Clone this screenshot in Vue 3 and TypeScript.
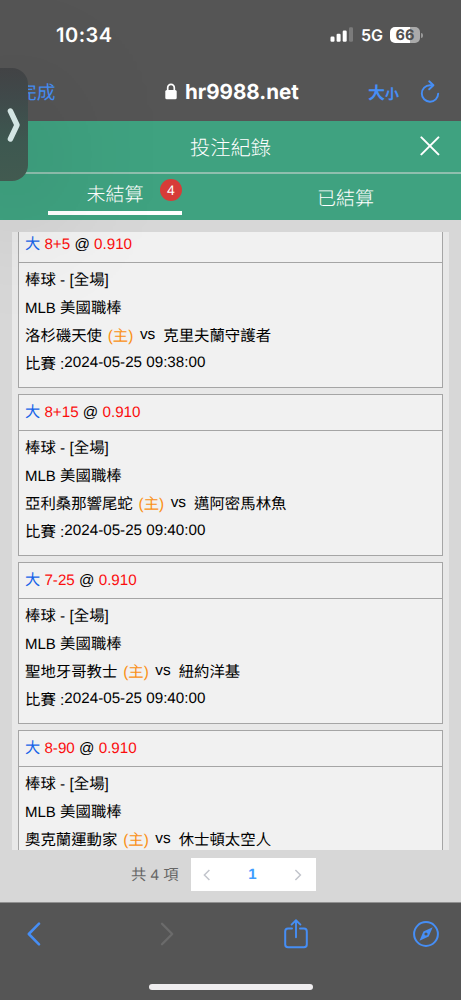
<script setup lang="ts">
import { ref } from 'vue'

interface Bet {
  pick: string
  line: string
  odds: string
  home: string
  away: string
  time: string
}

const bets: Bet[] = [
  { pick: '大', line: '8+5', odds: '0.910', home: '洛杉磯天使', away: '克里夫蘭守護者', time: '2024-05-25 09:38:00' },
  { pick: '大', line: '8+15', odds: '0.910', home: '亞利桑那響尾蛇', away: '邁阿密馬林魚', time: '2024-05-25 09:40:00' },
  { pick: '大', line: '7-25', odds: '0.910', home: '聖地牙哥教士', away: '紐約洋基', time: '2024-05-25 09:40:00' },
  { pick: '大', line: '8-90', odds: '0.910', home: '奧克蘭運動家', away: '休士頓太空人', time: '2024-05-25 09:40:00' },
]

const tab = ref<'open' | 'settled'>('open')
const page = ref(1)
</script>

<template>
  <div class="phone">
    <div class="status-bar">
      <span class="clock">10:34</span>
      <div class="status-icons">
        <svg class="signal" width="24" height="16" viewBox="0 0 24 16">
          <rect x="0.5" y="9.5" width="4" height="5.3" rx="1.2" fill="#fff" />
          <rect x="6.6" y="6.8" width="4" height="8" rx="1.2" fill="#fff" />
          <rect x="12.7" y="3.6" width="4" height="11.2" rx="1.2" fill="#fff" />
          <rect x="19" y="0.3" width="4" height="14.5" rx="1.2" fill="#7b7b7b" />
        </svg>
        <span class="network">5G</span>
        <div class="battery"><span>66</span></div>
        <i class="battery-tip"></i>
      </div>
    </div>

    <div class="address-bar">
      <span class="done">完成</span>
      <div class="site">
        <svg width="12" height="17" viewBox="0 0 12 17">
          <path d="M2.7 8V4.7a3.3 3.4 0 0 1 6.6 0V8" fill="none" stroke="#fff" stroke-width="1.7" />
          <rect x="0.3" y="7" width="11.4" height="9.3" rx="1.6" fill="#fff" />
        </svg>
        <span>hr9988.net</span>
      </div>
      <span class="text-size">大<small>小</small></span>
      <svg class="reload" width="20" height="24" viewBox="0 0 20 24" fill="none" stroke="#468ef5" stroke-width="1.9" stroke-linecap="round" stroke-linejoin="round">
        <path d="M12.5 5.3H10a8.2 8.2 0 1 0 8.2 8.3" />
        <path d="M9.2 1.3l4.2 4-4.2 4" />
      </svg>
    </div>

    <header class="title-bar">
      <h1>投注紀錄</h1>
      <svg class="close" width="20" height="20" viewBox="0 0 20 20" stroke="#fff" stroke-width="2" stroke-linecap="round">
        <path d="M1.4 1.4l17 17M18.4 1.4l-17 17" />
      </svg>
    </header>

    <nav class="tabs">
      <div class="tab" :class="{ active: tab === 'open' }" @click="tab = 'open'">
        <span>未結算</span>
        <b class="badge">{{ bets.length }}</b>
      </div>
      <div class="tab" :class="{ active: tab === 'settled' }" @click="tab = 'settled'">
        <span>已結算</span>
      </div>
    </nav>

    <main class="content">
      <div class="bet-list">
        <article v-for="bet in bets" :key="bet.home" class="bet">
          <div class="bet-head">
            <span class="pick">{{ bet.pick }}</span>&nbsp;<span class="red">{{ bet.line }}</span> @ <span class="red">{{ bet.odds }}</span>
          </div>
          <div class="bet-body">
            <div class="row">棒球 - [全場]</div>
            <div class="row"><span class="latin">MLB</span> 美國職棒</div>
            <div class="row">
              {{ bet.home }} <span class="host">(主)</span><span class="vs">vs</span>{{ bet.away }}
            </div>
            <div class="row">比賽 :<span class="time">{{ bet.time }}</span></div>
          </div>
        </article>
      </div>

      <div class="pagination">
        <span class="total">共 {{ bets.length }} 項</span>
        <div class="pager">
          <svg width="8" height="12" viewBox="0 0 8 12"><path d="M6.4 1L1.4 6l5 5" /></svg>
          <span class="current">{{ page }}</span>
          <svg width="8" height="12" viewBox="0 0 8 12"><path d="M1.4 1l5 5-5 5" /></svg>
        </div>
      </div>
    </main>

    <footer class="toolbar">
      <div class="tools">
        <svg width="14" height="24" viewBox="0 0 14 24" class="tool">
          <path d="M12 1.7L1.8 12 12 22.3" stroke-width="2.5" />
        </svg>
        <svg width="14" height="24" viewBox="0 0 14 24" class="tool disabled">
          <path d="M2 1.7L12.2 12 2 22.3" stroke-width="2.3" />
        </svg>
        <svg width="24" height="30" viewBox="0 0 24 30" class="tool share">
          <path d="M8 9.6H4A2.8 2.8 0 0 0 1.2 12.4v13A2.8 2.8 0 0 0 4 28.2h16a2.8 2.8 0 0 0 2.8-2.8v-13A2.8 2.8 0 0 0 20 9.6h-4" stroke-width="2" />
          <path d="M12 18.3V1.6M7.6 5.6L12 1.3l4.4 4.3" stroke-width="1.9" />
        </svg>
        <svg width="26" height="26" viewBox="0 0 26 26" class="tool">
          <circle cx="13" cy="13" r="11.9" stroke-width="2" />
          <path fill="#468ef5" fill-rule="evenodd" stroke="none" d="M19.7 6.3 15.7 15.4 6.5 19.7 10.4 10.4ZM13 11.4a1.6 1.6 0 1 0 0 3.2 1.6 1.6 0 0 0 0-3.2Z" />
        </svg>
      </div>
      <div class="home-indicator"></div>
    </footer>

    <!-- edge handle floating over the page -->
    <aside class="drawer">
      <svg width="14" height="36" viewBox="0 0 14 36" fill="none" stroke="#d3e5e3" stroke-width="5.4" stroke-linecap="round" stroke-linejoin="round">
        <path d="M3.4 4L10 18 3.4 32" />
      </svg>
    </aside>
  </div>
</template>

<style>
body {
  margin: 0;
}
</style>

<style scoped>
.phone {
  position: relative;
  display: flex;
  flex-direction: column;
  width: 461px;
  height: 1000px;
  overflow: hidden;
  background: #555;
  font-family: 'Liberation Sans', 'Noto Sans CJK TC', sans-serif;
  text-rendering: geometricPrecision;
}

.phone svg {
  display: block;
  flex: none;
}

.status-bar {
  display: flex;
  justify-content: space-between;
  align-items: center;
  box-sizing: border-box;
  height: 68px;
  padding: 2px 38px 0 56px;
  color: #fff;
  font-family: Inter, sans-serif;
  font-weight: 600;
}

.clock {
  font-size: 20px;
  letter-spacing: 0.5px;
}

.status-icons {
  display: flex;
  align-items: center;
}

.network {
  margin: 0 7px 0 7px;
  font-size: 16px;
}

.battery {
  width: 30px;
  height: 16px;
  border-radius: 5px;
  background: linear-gradient(90deg, #fff 66%, #aaa 66%);
  color: #505050;
  font-size: 14.5px;
  font-weight: 700;
  line-height: 17.5px;
  text-align: center;
}

.battery-tip {
  width: 2px;
  height: 5px;
  margin-left: 1px;
  border-radius: 0 2px 2px 0;
  background: #999;
}

.address-bar {
  display: flex;
  align-items: center;
  box-sizing: border-box;
  height: 53px;
  padding: 0 21px 6px 18px;
}

.done {
  width: 147px;
  color: #468ef5;
  font-size: 18.7px;
}

.site {
  display: flex;
  align-items: center;
  gap: 8px;
  width: 203px;
  color: #fff;
  font-family: Inter, sans-serif;
  font-size: 20.6px;
  font-weight: 700;
}

.text-size {
  width: 52px;
  color: #468ef5;
  font-size: 17px;
  font-weight: 700;
  white-space: nowrap;
}

.text-size small {
  font-size: 14px;
}

.title-bar {
  display: flex;
  align-items: center;
  box-sizing: border-box;
  height: 53px;
  padding: 0 21px 2px 190px;
  border-bottom: 2px solid #8fbfae;
  background: #3fa280;
  color: #fff;
}

.title-bar h1 {
  flex: 1;
  margin: 0;
  font-size: 20.3px;
  font-weight: 300;
}

.tabs {
  display: flex;
  height: 46px;
  background: #3fa280;
  color: #fff;
  font-size: 19px;
  font-weight: 300;
}

.tab {
  display: flex;
  flex: 1;
  justify-content: center;
  align-items: center;
}

.tab.active {
  flex: none;
  box-sizing: border-box;
  width: 134px;
  height: 41px;
  margin: 0 48px;
  padding-top: 2px;
  border-bottom: 4px solid #fff;
}

.badge {
  position: absolute;
  top: 179px;
  left: 160px;
  width: 22px;
  height: 22px;
  border-radius: 50%;
  background: #d73c38;
  font-size: 14px;
  font-weight: 400;
  line-height: 22px;
  text-align: center;
}

.content {
  display: flex;
  flex-direction: column;
  height: 682px;
  padding: 0 12px;
  background: #d7d7d7;
}

.bet-list {
  height: 618px;
  margin-top: 12px;
  padding: 0 6px;
  overflow: hidden;
  background: #e8e8e8;
}

.bet {
  box-sizing: border-box;
  height: 162px;
  margin-bottom: 6px;
  border: 1px solid #a5a5a5;
  background: #f1f1f1;
  color: #000;
  font-size: 15.4px;
  white-space: nowrap;
}

/* the list is scrolled down a few pixels */
.bet:first-child {
  margin-top: -6px;
}

.bet-head {
  height: 35px;
  padding: 0 6px;
  border-bottom: 1px solid #a5a5a5;
  font-size: 15.2px;
  line-height: 36px;
}

.pick {
  color: #1764e8;
}

.red {
  color: #fb0d0d;
}

.bet-body {
  padding: 4px 6px;
}

.row {
  height: 28px;
  line-height: 28px;
}

.latin {
  font-size: 15px;
}

.host {
  margin-left: 1.5px;
  color: #fa9014;
}

.vs {
  position: relative;
  top: -2px;
  margin: 0 8px 0 6.5px;
}

.time {
  position: relative;
  top: -2px;
  font-size: 15.2px;
}

.pagination {
  display: flex;
  align-items: center;
  height: 49px;
  padding-left: 119px;
}

.total {
  width: 60px;
  padding-bottom: 2px;
  color: #666;
  font-size: 15.3px;
  white-space: nowrap;
}

.pager {
  display: flex;
  justify-content: space-between;
  align-items: center;
  box-sizing: border-box;
  width: 125px;
  height: 33px;
  padding: 0 14px 0 12px;
  background: #fff;
}

.pager svg {
  fill: none;
  stroke: #c2c5cc;
  stroke-width: 1.5;
}

.current {
  color: #409eff;
  font-size: 15px;
  font-weight: 700;
}

.toolbar {
  box-sizing: border-box;
  height: 98px;
  border-top: 1px solid #909090;
  background: #555;
}

.tools {
  display: flex;
  justify-content: space-between;
  align-items: center;
  height: 62px;
  padding: 0 22px 0 27px;
}

.tool {
  fill: none;
  stroke: #468ef5;
  stroke-linecap: round;
  stroke-linejoin: round;
}

.tool.disabled {
  margin-right: -8px;
  margin-left: 7px;
  stroke: #6b6b6b;
}

.tool.share {
  margin-left: 6.5px;
  margin-right: -6.5px;
}

.home-indicator {
  width: 164px;
  height: 6px;
  margin: 19px 0 0 149px;
  border-radius: 3px;
  background: #efedef;
}

.drawer {
  position: absolute;
  top: 68px;
  left: 0;
  display: flex;
  align-items: center;
  justify-content: center;
  width: 28px;
  height: 113px;
  border-radius: 0 16px 16px 0;
  background: linear-gradient(#424345 0%, #40494a 25%, #3d5850 65%, #425a50 100%);
  box-shadow: 0 30px 120px rgba(0, 0, 0, 0.34);
}
</style>
